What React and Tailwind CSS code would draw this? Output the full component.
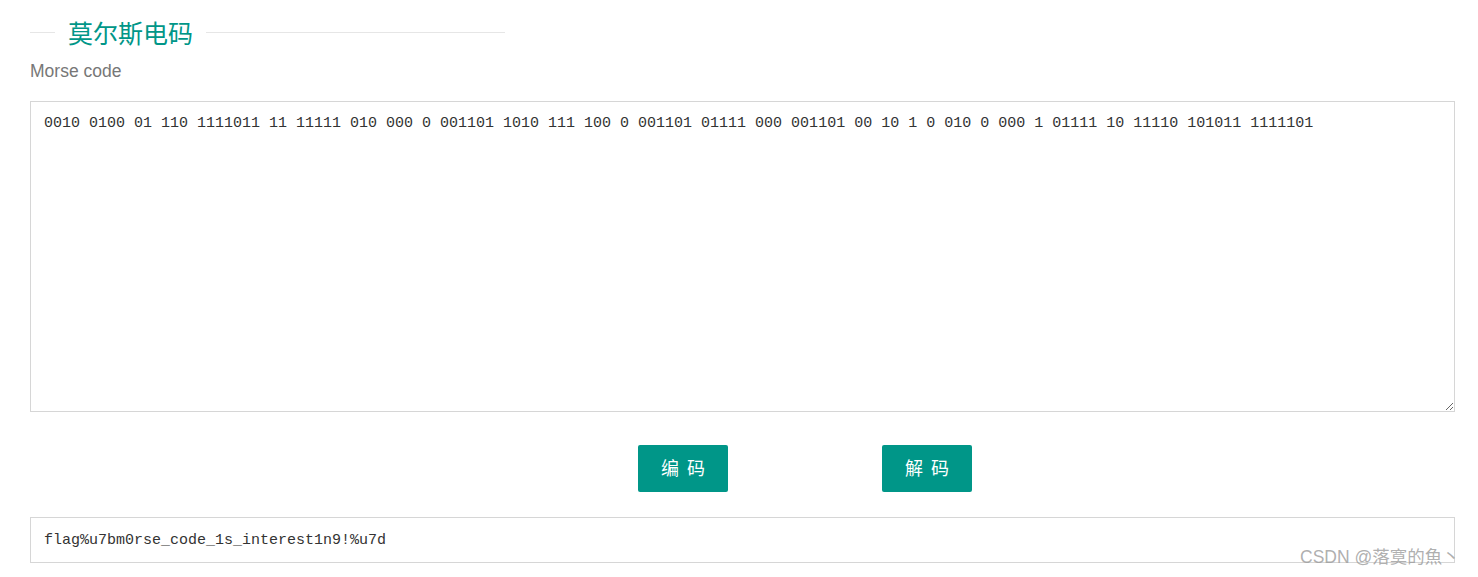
import React from "react";

const morse =
  "0010 0100 01 110 1111011 11 11111 010 000 0 001101 1010 111 100 0 001101 01111 000 001101 00 10 1 0 010 0 000 1 01111 10 11110 101011 1111101";

export default function App() {
  return (
    <div className="relative w-[1478px] h-[577px] overflow-hidden bg-white pl-[30px] pr-[23px] pt-[12px] font-['Liberation_Sans','Noto_Sans_CJK_SC',sans-serif]">
      {/* legend */}
      <div className="flex items-center w-[475px] h-[40px]">
        <div className="w-[25px] h-px bg-[#e6e6e6]" />
        <div className="px-[13px] text-[25px] leading-[40px] text-[#009688] font-['Noto_Sans_CJK_SC',sans-serif]">
          莫尔斯电码
        </div>
        <div className="flex-1 h-px bg-[#e6e6e6]" />
      </div>

      <div className="mt-[7px] h-[24px] text-[17.5px] leading-[24px] text-[#777777]">
        Morse code
      </div>

      <textarea
        className="mt-[18px] block w-full h-[311px] border border-[#d6d6d6] bg-white px-[13px] pt-[12px] text-[15px] leading-[20px] text-[#333333] outline-none font-['Liberation_Mono','Noto_Sans_CJK_SC',monospace]"
        defaultValue={morse}
        spellCheck={false}
      />

      <div className="mt-[33px] flex pl-[608px] gap-[154px]">
        <button className="w-[90px] h-[47px] pb-[3px] rounded-[2px] bg-[#009688] text-white text-[18px] flex items-center justify-center gap-[8px] font-['Noto_Sans_CJK_SC',sans-serif]">
          <span>编</span>
          <span>码</span>
        </button>
        <button className="w-[90px] h-[47px] pb-[3px] rounded-[2px] bg-[#009688] text-white text-[18px] flex items-center justify-center gap-[8px] font-['Noto_Sans_CJK_SC',sans-serif]">
          <span>解</span>
          <span>码</span>
        </button>
      </div>

      <div className="mt-[25px] h-[46px] border border-[#d6d6d6] pl-[13px] pt-[3px] flex items-center text-[15px] text-[#333333] font-['Liberation_Mono','Noto_Sans_CJK_SC',monospace]">
        flag%u7bm0rse_code_1s_interest1n9!%u7d
      </div>

      <div className="absolute left-[1300px] top-[546px] text-[17.5px] leading-[22px] text-[#9a9a9a]/80 whitespace-nowrap">
        CSDN @落寞的魚丶
      </div>
    </div>
  );
}
